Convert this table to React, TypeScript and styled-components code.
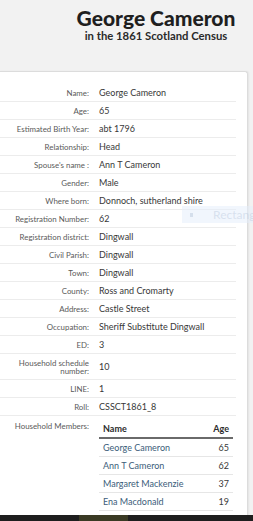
import React from "react";
import styled, { createGlobalStyle } from "styled-components";

const Global = createGlobalStyle`
  html, body { margin: 0; padding: 0; }
  body {
    background: #f2f2f2;
    font-family: Lato, "Open Sans", sans-serif;
    overflow: hidden;
    height: 521px;
  }
`;

const Page = styled.div`
  position: relative;
  width: 253px;
  height: 521px;
  overflow: hidden;
  display: flex;
  flex-direction: column;
`;

const Header = styled.header`
  height: 71px;
  box-sizing: border-box;
  padding: 6px 0 0 59px;
  display: flex;
  flex-direction: column;
  align-items: center;
  color: #1f1f1f;
`;

const Title = styled.h1`
  margin: 0;
  font-size: 21px;
  line-height: 24px;
  font-weight: 900;
`;

const Subtitle = styled.div`
  font-size: 11.3px;
  line-height: 13px;
  margin-top: -1px;
  font-weight: 700;
  color: #2a2a2a;
`;

const Card = styled.section`
  flex: 1;
  width: 249px;
  margin-left: -1px;
  box-sizing: border-box;
  background: #fff;
  border: 1px solid #dcdcdc;
  border-bottom: none;
  border-radius: 0 3px 0 0;
  box-shadow: 1px 0 2px rgba(0, 0, 0, 0.06);
  padding: 12px 11px 0 0;
`;

const Row = styled.div<{ $tall?: boolean; $last?: boolean }>`
  display: grid;
  grid-template-columns: 89px 1fr;
  column-gap: 10px;
  align-items: ${(p) => (p.$last ? "start" : "center")};
  min-height: ${(p) => (p.$tall ? "26px" : "18px")};
  border-bottom: ${(p) => (p.$last ? "none" : "1px solid #ececec")};
  box-sizing: border-box;
`;

const Label = styled.div`
  text-align: right;
  font-size: 7.9px;
  line-height: 8px;
  color: #5a5a5a;
`;

const Value = styled.div`
  font-size: 9px;
  line-height: 12px;
  color: #383838;
`;

const LabelTop = styled(Label)`
  padding-top: 6px;
`;

const Members = styled.table`
  border-collapse: collapse;
  width: 134px;
  margin-top: 5px;
  font-size: 9px;
  color: #383838;
`;

const Th = styled.th<{ $right?: boolean }>`
  text-align: ${(p) => (p.$right ? "right" : "left")};
  font-weight: 700;
  color: #2c2c2c;
  padding: 0 4px 2px 4px;
  border-bottom: 2px solid #6a6a6a;
  height: 14px;
`;

const Td = styled.td<{ $right?: boolean }>`
  text-align: ${(p) => (p.$right ? "right" : "left")};
  padding: 0 4px;
  height: 17px;
  border-bottom: 1px solid #e6e6e6;
`;

const Link = styled.a`
  color: #3b5d7a;
  text-decoration: none;
`;

const Snip = styled.div`
  position: absolute;
  left: 182px;
  top: 206px;
  width: 71px;
  height: 17px;
  overflow: hidden;
  background: rgba(228, 238, 251, 0.5);
  display: flex;
  align-items: center;
  gap: 20px;
  padding-left: 8px;
  box-sizing: border-box;
  font-size: 12px;
  white-space: nowrap;
  color: rgba(175, 192, 215, 0.4);
`;

const SnipDot = styled.span`
  flex: none;
  width: 3px;
  height: 4px;
  background: rgba(150, 170, 200, 0.3);
`;

const Taskbar = styled.div`
  position: absolute;
  left: 0;
  bottom: 0;
  width: 253px;
  height: 6px;
  background: #1e1e1e;
  display: flex;
`;

const TaskItem = styled.span`
  margin-left: 79px;
  width: 49px;
  background: #3a3a24;
`;

const rows: [string, string][] = [
  ["Name:", "George Cameron"],
  ["Age:", "65"],
  ["Estimated Birth Year:", "abt 1796"],
  ["Relationship:", "Head"],
  ["Spouse's name :", "Ann T Cameron"],
  ["Gender:", "Male"],
  ["Where born:", "Donnoch, sutherland shire"],
  ["Registration Number:", "62"],
  ["Registration district:", "Dingwall"],
  ["Civil Parish:", "Dingwall"],
  ["Town:", "Dingwall"],
  ["County:", "Ross and Cromarty"],
  ["Address:", "Castle Street"],
  ["Occupation:", "Sheriff Substitute Dingwall"],
  ["ED:", "3"],
  ["Household schedule number:", "10"],
  ["LINE:", "1"],
  ["Roll:", "CSSCT1861_8"],
];

const members: [string, string][] = [
  ["George Cameron", "65"],
  ["Ann T Cameron", "62"],
  ["Margaret Mackenzie", "37"],
  ["Ena Macdonald", "19"],
];

export default function App() {
  return (
    <Page>
      <Global />
      <Header>
        <Title>George Cameron</Title>
        <Subtitle>in the 1861 Scotland Census</Subtitle>
      </Header>
      <Card>
        {rows.map(([l, v]) => (
          <Row key={l} $tall={l.startsWith("Household")}>
            <Label>{l}</Label>
            <Value>{v}</Value>
          </Row>
        ))}
        <Row $last>
          <LabelTop>Household Members:</LabelTop>
          <Members>
            <thead>
              <tr>
                <Th>Name</Th>
                <Th $right>Age</Th>
              </tr>
            </thead>
            <tbody>
              {members.map(([n, a]) => (
                <tr key={n}>
                  <Td>
                    <Link href="#">{n}</Link>
                  </Td>
                  <Td $right>{a}</Td>
                </tr>
              ))}
            </tbody>
          </Members>
        </Row>
      </Card>
      <Snip>
        <SnipDot />
        Rectangle
      </Snip>
      <Taskbar>
        <TaskItem />
      </Taskbar>
    </Page>
  );
}
